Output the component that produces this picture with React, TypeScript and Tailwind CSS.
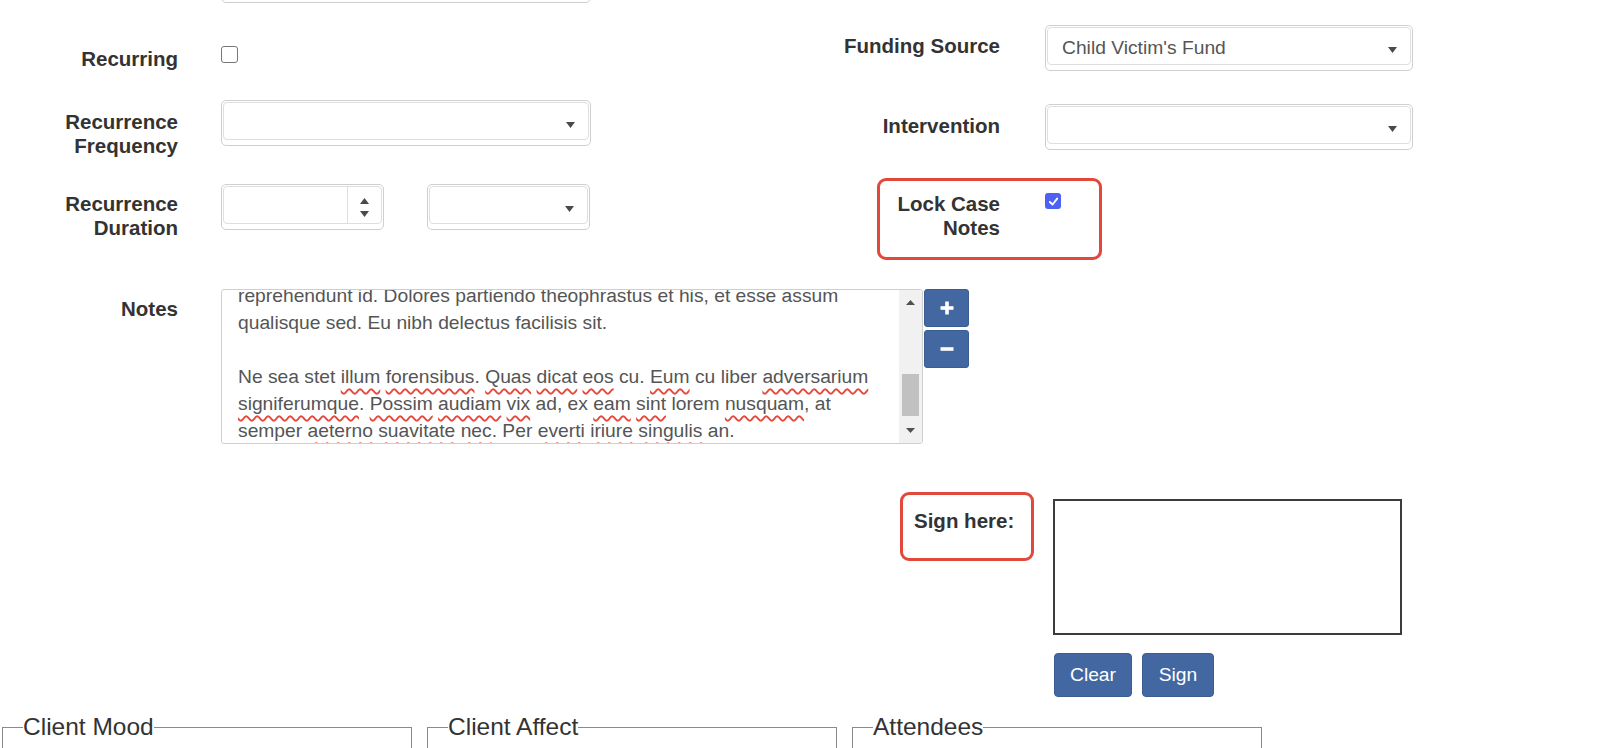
import React from 'react';

const LABEL = "text-right font-bold text-[20.5px] leading-[23.5px] text-[#333] whitespace-nowrap";

const Caret = ({ up = false }: { up?: boolean }) => (
  <svg width="9" height="6" viewBox="0 0 9 6" className="block">
    <polygon points={up ? "0,6 9,6 4.5,0" : "0,0 9,0 4.5,6"} fill="#4a4a4a" />
  </svg>
);

interface ShellProps {
  className?: string;
  children?: React.ReactNode;
}

const Shell = ({ className = '', children }: ShellProps) => (
  <div className={`h-[46px] rounded-[5px] border border-[#cfcfcf] bg-white p-px pb-[5px] ${className}`}>
    <div className="flex h-full items-center rounded-[4px] border border-[#dedede]">{children}</div>
  </div>
);

const Select = ({ value = '', className = '' }: { value?: string; className?: string }) => (
  <Shell className={className}>
    <span className="flex-1 pl-[14px] pt-[4px] text-[19.25px] text-[#555]">{value}</span>
    <span className="pr-[13px] pt-[8px]">
      <Caret />
    </span>
  </Shell>
);

const Spinner = () => (
  <Shell className="w-[163px]">
    <div className="h-full flex-1" />
    <div className="flex h-full w-[34px] flex-col items-center justify-center gap-[7px] border-l border-[#dedede] pt-[4px]">
      <Caret up />
      <Caret />
    </div>
  </Shell>
);

const Check = ({ checked = false }: { checked?: boolean }) =>
  checked ? (
    <div className="flex h-[16px] w-[16px] items-center justify-center rounded-[3px] bg-[#4d61f2]">
      <svg width="11" height="11" viewBox="0 0 12 12">
        <path d="M2 6.5 L5 9.3 L10 2.8" fill="none" stroke="#fff" strokeWidth="2" strokeLinecap="round" strokeLinejoin="round" />
      </svg>
    </div>
  ) : (
    <div className="h-[17px] w-[17px] rounded-[3px] border border-[#767676] bg-white" />
  );

// spell-check squiggle
const W = ({ children }: { children: React.ReactNode }) => (
  <span className="underline decoration-[#e5483c] decoration-wavy decoration-[1.5px] underline-offset-[5px]">{children}</span>
);

const Callout = ({ className }: { className: string }) => (
  <div className={`pointer-events-none absolute rounded-[9px] border-[3px] border-[#e2493b] ${className}`} />
);

const Notes = () => (
  <div className="flex h-[155px] w-[702px] overflow-hidden rounded-[3px] border border-[#cfcfcf] bg-white">
    <div className="flex-1 overflow-hidden pl-[16px]">
      <div className="-mt-[8px] whitespace-nowrap text-[19.25px] leading-[27px] text-[#555]">
        <div>reprehendunt id. Dolores partiendo theophrastus et his, et esse assum</div>
        <div>qualisque sed. Eu nibh delectus facilisis sit.</div>
        <div>&nbsp;</div>
        <div>
          Ne sea stet <W>illum</W> <W>forensibus</W>. <W>Quas</W> <W>dicat</W> <W>eos</W> cu. <W>Eum</W> cu liber{' '}
          <W>adversarium</W>
        </div>
        <div>
          <W>signiferumque</W>. <W>Possim</W> <W>audiam</W> <W>vix</W> ad, ex <W>eam</W> <W>sint</W> lorem <W>nusquam</W>, at
        </div>
        <div>
          semper <W>aeterno</W> <W>suavitate</W> <W>nec</W>. Per <W>everti</W> <W>iriure</W> <W>singulis</W> an.
        </div>
      </div>
    </div>
    <div className="flex w-[23px] flex-col bg-[#f1f1f1]">
      <div className="flex h-[22px] items-center justify-center pt-[2px]">
        <svg width="9" height="5" viewBox="0 0 9 5"><polygon points="0,5 9,5 4.5,0" fill="#505050" /></svg>
      </div>
      <div className="flex-1 px-[3px]">
        <div className="mt-[62px] h-[42px] bg-[#c1c1c1]" />
      </div>
      <div className="flex h-[22px] items-center justify-center pb-[4px]">
        <svg width="9" height="5" viewBox="0 0 9 5"><polygon points="0,0 9,0 4.5,5" fill="#505050" /></svg>
      </div>
    </div>
  </div>
);

const StepButton = ({ plus = false }: { plus?: boolean }) => (
  <button className="flex h-[38px] w-[45px] items-center justify-center rounded-[3px] border border-[#3a5e94] bg-[#4267a1]">
    <svg width="16" height="16" viewBox="0 0 16 16">
      <rect x="1.5" y="6.2" width="13" height="3.6" fill="#fff" />
      {plus && <rect x="6.2" y="1.5" width="3.6" height="13" fill="#fff" />}
    </svg>
  </button>
);

export default function App() {
  return (
    <div className="h-[748px] w-full overflow-hidden bg-white font-['Liberation_Sans',Arial,sans-serif] text-[#333]">
      <div className="-mt-[43px]">
        <div className="flex">
          {/* left column */}
          <div className="w-[820px] shrink-0">
            <div className="flex">
              <div className="w-[178px]" />
              <Shell className="ml-[43px] w-[370px]" />
            </div>

            <div className="mt-[43px] flex h-[25px] items-start">
              <div className={`${LABEL} w-[178px] pt-px`}>Recurring</div>
              <div className="ml-[43px]">
                <Check />
              </div>
            </div>

            <div className="mt-[29px] flex h-[57px] items-start">
              <div className={`${LABEL} w-[178px] pt-[10px]`}>
                Recurrence
                <br />
                Frequency
              </div>
              <Select className="ml-[43px] w-[370px]" />
            </div>

            <div className="mt-[27px] flex h-[55px] items-start">
              <div className={`${LABEL} w-[178px] pt-[8px]`}>
                Recurrence
                <br />
                Duration
              </div>
              <div className="ml-[43px] flex gap-[43px]">
                <Spinner />
                <Select className="w-[163px]" />
              </div>
            </div>
          </div>

          {/* right column */}
          <div className="flex-1">
            <div className="mt-[68px] flex h-[46px] items-start">
              <div className={`${LABEL} w-[180px] pt-[9px]`}>Funding Source</div>
              <Select value="Child Victim's Fund" className="ml-[45px] w-[368px]" />
            </div>

            <div className="mt-[33px] flex h-[46px] items-start">
              <div className={`${LABEL} w-[180px] pt-[10px]`}>Intervention</div>
              <Select className="ml-[45px] w-[368px]" />
            </div>

            <div className="relative mt-[42px] flex h-[47px] items-start">
              <div className={`${LABEL} w-[180px]`}>
                Lock Case
                <br />
                Notes
              </div>
              <div className="ml-[45px] mt-px">
                <Check checked />
              </div>
              <Callout className="-top-[14px] left-[57px] h-[82px] w-[225px]" />
            </div>
          </div>
        </div>

        {/* notes */}
        <div className="mt-[50px] flex items-start">
          <div className={`${LABEL} w-[178px] pt-[8px]`}>Notes</div>
          <div className="ml-[43px]">
            <Notes />
          </div>
          <div className="ml-px flex flex-col gap-[3px]">
            <StepButton plus />
            <StepButton />
          </div>
        </div>

        {/* signature */}
        <div className="ml-[914px] mt-[55px] flex items-start">
          <div className="relative w-[139px] pt-[10px]">
            <div className="whitespace-nowrap text-[20.5px] font-bold leading-[23.5px] text-[#333]">Sign here:</div>
            <Callout className="-left-[14px] -top-[7px] h-[69px] w-[134px]" />
          </div>
          <div>
            <div className="h-[136px] w-[349px] border-2 border-[#3c3c3c] bg-white" />
            <div className="mt-[18px] flex gap-[10px] pl-px">
              <button className="h-[44px] w-[78px] rounded-[4px] border border-[#3a5e94] bg-[#4267a1] text-[19.25px] text-white">
                Clear
              </button>
              <button className="h-[44px] w-[72px] rounded-[4px] border border-[#3a5e94] bg-[#4267a1] text-[19.25px] text-white">
                Sign
              </button>
            </div>
          </div>
        </div>

        {/* fieldsets */}
        <div className="ml-[2px] mt-[16px] flex gap-[15px]">
          {['Client Mood', 'Client Affect', 'Attendees'].map((t) => (
            <fieldset key={t} className="h-[120px] w-[410px] border border-[#8a8a8a]">
              <legend className="ml-[20px] text-[24.5px] leading-[28px] text-[#333]">{t}</legend>
            </fieldset>
          ))}
        </div>
      </div>
    </div>
  );
}
